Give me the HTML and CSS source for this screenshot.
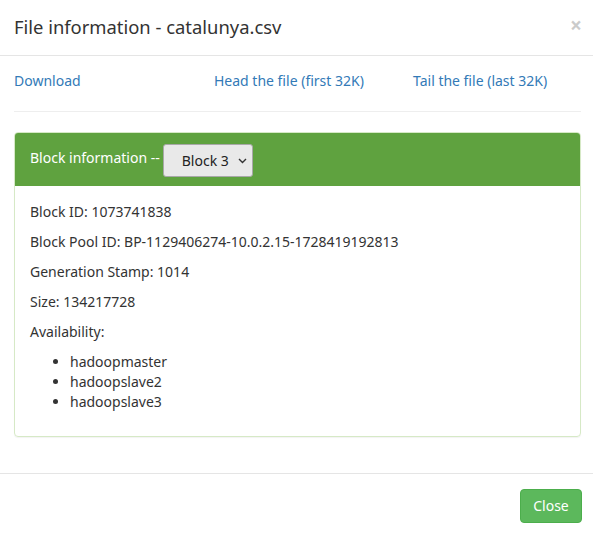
FILE: index.html
```html
<!DOCTYPE html>
<html>
<head>
<meta charset="utf-8">
<link rel="stylesheet" href="styles.css">
</head>
<body>
<div class="modal">
  <div class="modal-header">
    <h4 class="modal-title">File information - catalunya.csv</h4>
    <button class="close" type="button">×</button>
  </div>
  <div class="modal-body">
    <div class="links">
      <a href="#">Download</a>
      <a href="#">Head the file (first 32K)</a>
      <a href="#">Tail the file (last 32K)</a>
    </div>
    <hr class="sep">
    <div class="panel">
      <div class="panel-heading">
        <span>Block information --</span>
        <div class="select"><span class="sel-text">Block 3</span><svg width="9" height="6" viewBox="0 0 9 6"><path d="M1 1l3.5 3.5L8 1" fill="none" stroke="#333" stroke-width="1.4"/></svg></div>
      </div>
      <div class="panel-body">
        <p>Block ID: 1073741838</p>
        <p>Block Pool ID: BP-1129406274-10.0.2.15-1728419192813</p>
        <p>Generation Stamp: 1014</p>
        <p>Size: 134217728</p>
        <p>Availability:</p>
        <ul>
          <li>hadoopmaster</li>
          <li>hadoopslave2</li>
          <li>hadoopslave3</li>
        </ul>
      </div>
    </div>
  </div>
  <div class="modal-footer">
    <button class="btn-close" type="button">Close</button>
  </div>
</div>
</body>
</html>
```
FILE: styles.css
```css
* { box-sizing: border-box; }
html, body { margin: 0; padding: 0; background: #fff; }
body {
  font-family: "Noto Sans", "Open Sans", sans-serif;
  font-size: 14px;
  line-height: 20px;
  color: #333;
}
.modal { width: 593px; height: 537px; background: #fff; }
.modal-header {
  display: flex;
  justify-content: space-between;
  align-items: flex-start;
  padding: 14px 14px 14px 14px;
  border-bottom: 1px solid #e5e5e5;
  height: 56px;
}
.modal-title {
  margin: 0;
  font-size: 18.4px;
  font-weight: 400;
  line-height: 26px;
  color: #333;
}
.close {
  border: 0;
  background: none;
  padding: 0;
  margin-top: 1px;
  margin-right: -3px;
  font-family: "Open Sans", sans-serif;
  font-size: 21px;
  font-weight: 700;
  line-height: 21px;
  color: #000;
  opacity: 0.2;
}
.modal-body { padding: 15px 12px 15px 14px; height: 417px; }
.links {
  display: grid;
  grid-template-columns: 200px 199px auto;
}
.links a { color: #337ab7; text-decoration: none; }
.sep { border: 0; border-top: 1px solid #eee; margin: 20px 0 20px 0; }
.panel {
  border: 1px solid #d6e9c6;
  border-radius: 4px;
  box-shadow: 0 1px 1px rgba(0,0,0,0.05);
}
.panel-heading {
  background: #5fa23f;
  color: #fff;
  display: flex;
  align-items: center;
  gap: 3px;
  padding: 0 15px;
  height: 53px;
  border-top-left-radius: 3px;
  border-top-right-radius: 3px;
}
.panel-heading > span { margin-top: -3px; white-space: nowrap; }
.select {
  flex: 0 0 90px;
  display: flex;
  align-items: center;
  justify-content: space-between;
  white-space: nowrap;
  height: 33px;
  width: 90px;
  padding: 0 5px 0 18px;
  background: #e9e9e9;
  border: 1px solid #a8a8a8;
  border-radius: 3px;
  color: #222;
  margin-top: 2px;
}
.panel-body { padding: 16px 15px 14px; }
.panel-body p { margin: 0 0 10px; }
.panel-body ul { margin: 0 0 10px; padding-left: 40px; }
.modal-footer {
  border-top: 1px solid #e5e5e5;
  padding: 15px 11px 15px 15px;
  display: flex;
  justify-content: flex-end;
}
.btn-close {
  background: #5cb85c;
  border: 1px solid #4cae4c;
  border-radius: 4px;
  color: #fff;
  font-family: inherit;
  font-size: 14px;
  line-height: 20px;
  padding: 6px 12px;
  height: 34px;
  width: 62px;
}
```
